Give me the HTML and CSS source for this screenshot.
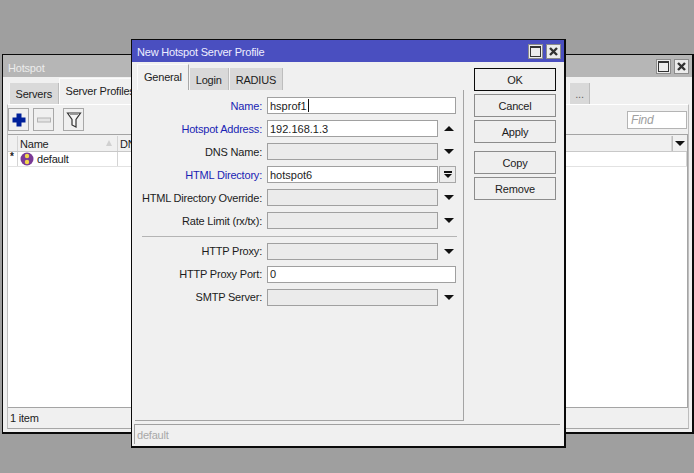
FILE: index.html
```html
<!DOCTYPE HTML>
<html>

<head>
    <title>Hotspot</title>
    <link rel="stylesheet" href="styles.css">
</head>

<body>
    <main class="desktop">
        <section class="window back">
            <header class="titlebar idle">
                <span class="title">Hotspot</span>
                <span class="winbtn"><i class="maximize"></i></span>
                <span class="winbtn">
                    <svg width="11" height="11" viewBox="0 0 11 11"><path d="M2 2l7 7M9 2l-7 7" stroke="#333" stroke-width="2.4" fill="none"/></svg>
                </span>
            </header>
            <div class="tabs back-tabs">
                <span class="tab">Servers</span>
                <span class="tab active clip">Server Profiles</span>
                <span class="tab more">...</span>
            </div>
            <div class="panel-back">
                <div class="toolbar">
                    <span class="tool">
                        <svg width="16" height="16" viewBox="0 0 16 16"><path d="M5.500 1.500h5v4h4v5h-4v4h-5v-4h-4v-5h4z" fill="#00209a"/></svg>
                    </span>
                    <span class="tool">
                        <svg width="16" height="16" viewBox="0 0 16 16"><rect x="1.500" y="6" width="13" height="4" fill="#e4e4e4" stroke="#b4b4b4"/></svg>
                    </span>
                    <span class="tool filter">
                        <svg width="16" height="18" viewBox="0 0 16 18"><path d="M1.500 2h13l-4.500 6.500v7.500l-4-2v-5.500z" fill="#f6f6f6" stroke="#333" stroke-width="1.200"/><path d="M4 3.500h8" stroke="#999"/></svg>
                    </span>
                    <span class="find">Find</span>
                </div>
                <div class="table">
                    <div class="thead">
                        <span class="cell flag"></span>
                        <span class="cell name">Name<em class="sort"></em></span>
                        <span class="cell dns">DNS Name</span>
                        <span class="cell drop"><i class="arrow"></i></span>
                    </div>
                    <div class="trow">
                        <span class="cell flag">*</span>
                        <span class="cell name">
                            <svg width="14" height="14" viewBox="0 0 14 14"><circle cx="7" cy="7" r="6.500" fill="#7a3a96"/><circle cx="7" cy="4" r="2.200" fill="#f2d84a"/><circle cx="7" cy="10" r="2.200" fill="#f2d84a"/></svg>
                            default
                        </span>
                        <span class="cell dns"></span>
                    </div>
                </div>
                <div class="count">1 item</div>
            </div>
        </section>

        <section class="window dialog">
            <header class="titlebar">
                <span class="title">New Hotspot Server Profile</span>
                <span class="winbtn"><i class="maximize"></i></span>
                <span class="winbtn">
                    <svg width="11" height="11" viewBox="0 0 11 11"><path d="M2 2l7 7M9 2l-7 7" stroke="#333" stroke-width="2.4" fill="none"/></svg>
                </span>
            </header>
            <div class="dialog-body">
                <div class="left">
                    <div class="tabs form-tabs">
                        <span class="tab active">General</span>
                        <span class="tab">Login</span>
                        <span class="tab">RADIUS</span>
                    </div>
                    <div class="form">
                        <div class="row">
                            <label class="blue">Name:</label>
                            <div class="field wide">hsprof1<i class="cursor"></i></div>
                        </div>
                        <div class="row">
                            <label class="blue">Hotspot Address:</label>
                            <div class="field">192.168.1.3</div>
                            <i class="arrow up"></i>
                        </div>
                        <div class="row">
                            <label>DNS Name:</label>
                            <div class="field off"></div>
                            <i class="arrow"></i>
                        </div>
                        <div class="row">
                            <label class="blue">HTML Directory:</label>
                            <div class="field">hotspot6</div>
                            <span class="dropbtn"><i class="bar"></i><i class="arrow small"></i></span>
                        </div>
                        <div class="row">
                            <label>HTML Directory Override:</label>
                            <div class="field off"></div>
                            <i class="arrow"></i>
                        </div>
                        <div class="row">
                            <label>Rate Limit (rx/tx):</label>
                            <div class="field off"></div>
                            <i class="arrow"></i>
                        </div>
                        <hr class="sep">
                        <div class="row">
                            <label>HTTP Proxy:</label>
                            <div class="field off"></div>
                            <i class="arrow"></i>
                        </div>
                        <div class="row">
                            <label>HTTP Proxy Port:</label>
                            <div class="field wide">0</div>
                        </div>
                        <div class="row">
                            <label>SMTP Server:</label>
                            <div class="field off"></div>
                            <i class="arrow"></i>
                        </div>
                    </div>
                </div>
                <div class="buttons">
                    <button class="default">OK</button>
                    <button>Cancel</button>
                    <button>Apply</button>
                    <button class="spaced">Copy</button>
                    <button>Remove</button>
                </div>
            </div>
            <div class="status">default</div>
        </section>
    </main>
</body>

</html>
```

FILE: styles.css
```css
* {
    box-sizing: border-box;
}

html,
body {
    margin: 0;
    height: 100%;
}

body {
    background-color: #9f9f9f;
    font-family: "Liberation Sans", Arial, sans-serif;
    font-size: 11px;
    letter-spacing: -0.2px;
    color: #1c1c1c;
    overflow: hidden;
}

.desktop {
    position: relative;
    width: 694px;
    height: 473px;
}

.window {
    position: absolute;
    display: flex;
    flex-direction: column;
    background-color: #f0f0f0;
    border: 1px solid #0a0a0a;
    border-right-width: 2px;
    border-bottom-width: 2px;
}

.back {
    left: 2px;
    top: 54px;
    width: 692px;
    height: 380px;
}

.dialog {
    left: 131px;
    top: 39px;
    width: 435px;
    height: 409px;
}

/* title bars */
.titlebar {
    display: flex;
    align-items: center;
    gap: 3px;
    flex: none;
    height: 22px;
    padding: 0 3px 0 5px;
    background-color: #4a4fc0;
    color: #eef;
}

.titlebar.idle {
    background-color: #b6b6b6;
    color: #ececec;
}

.title {
    flex: 1;
    padding-top: 2px;
}

.idle .title {
    padding-top: 4px;
}

.winbtn {
    display: flex;
    align-items: center;
    justify-content: center;
    width: 15px;
    height: 15px;
    background-color: #ececec;
    border: 1px solid #8c8c8c;
}

.maximize {
    display: block;
    width: 11px;
    height: 11px;
    border: 1px solid #333;
    border-top-width: 2px;
}

/* tabs */
.tabs {
    display: flex;
    align-items: flex-end;
    height: 26px;
    flex: none;
}

.form-tabs {
    padding-left: 2px;
}

.back-tabs {
    height: 27px;
    padding: 0 102px 0 6px;
}

.tab {
    display: flex;
    align-items: center;
    justify-content: center;
    height: 22px;
    padding: 1px 6px 0;
    background-color: #d9d9d9;
    border-left: 1px solid #f4f4f4;
    border-right: 1px solid #bdbdbd;
}

.tab.active {
    height: 26px;
    padding: 0 6px 2px;
    background-color: #f0f0f0;
    border-top: 1px solid #fbfbfb;
    border-left: 1px solid #fbfbfb;
    border-right: 1px solid #a8a8a8;
}

.back-tabs .tab {
    height: 21px;
    padding: 1px 5.500px 0;
}

.back-tabs .active {
    height: 26px;
    padding: 0 20px 2px 6px;
    white-space: nowrap;
}

.more {
    width: 21px;
    margin-left: auto;
    color: #666;
}

.back-tabs .more {
    height: 21px;
}

/* list window */
.panel-back {
    display: flex;
    flex-direction: column;
    flex: 1;
    margin: 0 3px 3px 4px;
    border: 1px solid #a6a6a6;
    border-top: 1px solid #fff;
    border-left-color: #bdbdbd;
    border-right-color: #bdbdbd;
}

.toolbar {
    display: flex;
    align-items: center;
    gap: 4px;
    height: 29px;
    flex: none;
}

.tool {
    display: flex;
    align-items: center;
    justify-content: center;
    width: 21px;
    height: 23px;
    background-color: #f0f0f0;
    border: 1px solid #a8a8a8;
}

.filter {
    margin-left: 5px;
}

.find {
    display: flex;
    align-items: center;
    width: 60px;
    height: 18px;
    margin-left: auto;
    margin-right: 1px;
    padding-left: 3px;
    background-color: #fff;
    border: 1px solid #b4b4b4;
    color: #a0a0a0;
    font-style: italic;
    font-size: 12px;
}

.table {
    display: flex;
    flex-direction: column;
    flex: 1;
    background-color: #fff;
    border-top: 1px solid #a4a4a4;
    border-bottom: 1px solid #a4a4a4;
    border-right: 1px solid #a4a4a4;
}

.thead,
.trow {
    display: flex;
    align-items: stretch;
    flex: none;
}

.thead {
    height: 17px;
    padding-top: 1px;
    background-color: #f0f0f0;
    border-bottom: 1px solid #c8c8c8;
}

.trow {
    height: 15px;
    border-bottom: 1px solid #e2e2e2;
}

.cell {
    display: flex;
    align-items: center;
    gap: 3px;
    padding-left: 2px;
    border-right: 1px solid #d4d4d4;
}

.flag {
    width: 10px;
    align-items: flex-start;
    padding-left: 2px;
    font-weight: bold;
    font-size: 10px;
    line-height: 10px;
}

.name {
    position: relative;
    width: 100px;
}

.sort {
    position: absolute;
    right: 5px;
    top: 4px;
    border-left: 3px solid transparent;
    border-right: 3px solid transparent;
    border-bottom: 6px solid #d0d0d0;
}

.dns {
    flex: 1;
    white-space: nowrap;
}

.drop {
    width: 15px;
    border-right: 0;
    border-left: 1px solid #bdbdbd;
    padding-left: 0;
    justify-content: center;
}

.count {
    display: flex;
    align-items: center;
    height: 20px;
    flex: none;
    padding-left: 2px;
}

/* arrows */
.arrow {
    display: block;
    width: 0;
    height: 0;
    flex: none;
    border-left: 5.500px solid transparent;
    border-right: 5.500px solid transparent;
    border-top: 5px solid #111;
}

.arrow.up {
    border-top: 0;
    border-bottom: 5px solid #111;
}

.drop .arrow {
    border-left-width: 5px;
    border-right-width: 5px;
}

.arrow.small {
    border-left-width: 4px;
    border-right-width: 4px;
    border-top-width: 4px;
}

.bar {
    display: block;
    width: 8px;
    height: 2px;
    margin-bottom: 1px;
    background-color: #111;
}

/* dialog */
.dialog-body {
    display: flex;
    flex: 1;
    min-height: 0;
    padding: 2px 0 0 3px;
}

.left {
    display: flex;
    flex-direction: column;
    width: 329px;
    flex: none;
}

.form {
    display: flex;
    flex-direction: column;
    gap: 6.100px;
    flex: 1;
    padding: 7px 6px 0 2px;
    border-right: 1px solid #a4a4a4;
    border-bottom: 1px solid #a4a4a4;
}

.row {
    display: grid;
    grid-template-columns: 130px 171px 18px;
    align-items: center;
    height: 17px;
}

.row label {
    padding-right: 5px;
    text-align: right;
    white-space: nowrap;
}

.blue {
    color: #1a1fb4;
}

.field {
    display: flex;
    align-items: center;
    height: 17px;
    padding-left: 2px;
    background-color: #fff;
    border: 1px solid #a0a0a0;
    letter-spacing: 0;
}

.field.wide {
    width: 189px;
}

.field.off {
    background-color: #ebebeb;
}

.cursor {
    width: 1px;
    height: 13px;
    margin-left: 1px;
    background-color: #111;
}

.row .arrow {
    margin-left: 6px;
}

.dropbtn {
    display: flex;
    flex-direction: column;
    align-items: center;
    justify-content: center;
    height: 17px;
    margin-left: 1px;
    background-color: #ececec;
    border: 1px solid #a8a8a8;
}

.row .dropbtn .arrow {
    margin-left: 0;
}

.sep {
    width: 315px;
    height: 1px;
    margin: 0 0 0 5px;
    border: 0;
    background-color: #b4b4b4;
}

.buttons {
    display: flex;
    flex-direction: column;
    gap: 3px;
    width: 82px;
    margin: 4px 0 0 10px;
}

.buttons button {
    height: 23px;
    padding: 0;
    background-color: #efefef;
    border: 1px solid #8c8c8c;
    border-radius: 0;
    color: #1c1c1c;
    font: inherit;
    letter-spacing: -0.2px;
}

.buttons .default {
    border-color: #0a0a0a;
}

.buttons .spaced {
    margin-top: 5px;
}

.status {
    display: flex;
    align-items: center;
    height: 20px;
    flex: none;
    margin: 3px 4px 2px 2px;
    padding-left: 2px;
    border-top: 1px solid #a0a0a0;
    border-left: 1px solid #a0a0a0;
    color: #a8a8a8;
}
```
